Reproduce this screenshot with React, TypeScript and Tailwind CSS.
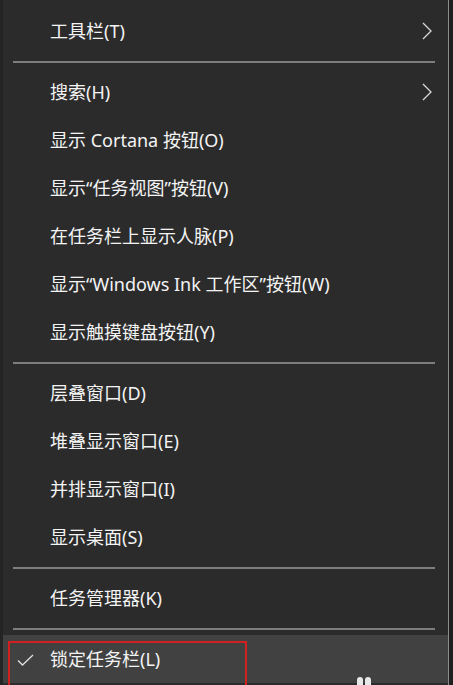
const font = {
  fontFamily: '"Noto Sans", "Noto Sans CJK SC", sans-serif',
};

type Entry =
  | { kind: "item"; label: string; submenu?: boolean; checked?: boolean; active?: boolean }
  | { kind: "sep" };

const entries: Entry[] = [
  { kind: "item", label: "工具栏(T)", submenu: true },
  { kind: "sep" },
  { kind: "item", label: "搜索(H)", submenu: true },
  { kind: "item", label: "显示 Cortana 按钮(O)" },
  { kind: "item", label: "显示“任务视图”按钮(V)" },
  { kind: "item", label: "在任务栏上显示人脉(P)" },
  { kind: "item", label: "显示“Windows Ink 工作区”按钮(W)" },
  { kind: "item", label: "显示触摸键盘按钮(Y)" },
  { kind: "sep" },
  { kind: "item", label: "层叠窗口(D)" },
  { kind: "item", label: "堆叠显示窗口(E)" },
  { kind: "item", label: "并排显示窗口(I)" },
  { kind: "item", label: "显示桌面(S)" },
  { kind: "sep" },
  { kind: "item", label: "任务管理器(K)" },
  { kind: "sep" },
  { kind: "item", label: "锁定任务栏(L)", checked: true, active: true },
];

function Chevron() {
  return (
    <svg width="12" height="18" viewBox="0 0 12 18" fill="none" className="text-[#d8d8d8]">
      <path d="M2 1 L10 9 L2 17" stroke="currentColor" strokeWidth="1.3" />
    </svg>
  );
}

function Check() {
  return (
    <svg width="17" height="12" viewBox="0 0 17 12" fill="none" className="text-[#e0e0e0]">
      <path d="M1 6.5 L5.5 11 L16 1" stroke="currentColor" strokeWidth="1.3" />
    </svg>
  );
}

function MenuRow({ entry }: { entry: Extract<Entry, { kind: "item" }> }) {
  return (
    <div
      className={`relative flex h-12 items-center pl-[47px] pr-[15px] ${
        entry.active ? "bg-[#414141]" : ""
      }`}
    >
      {entry.checked ? (
        <span className="absolute left-[14px] top-[19px]">
          <Check />
        </span>
      ) : null}
      <span className="flex-1 text-[18px] leading-none text-[#f4f4f4]">{entry.label}</span>
      {entry.submenu ? <Chevron /> : null}
    </div>
  );
}

export default function App() {
  return (
    <div style={font} className="relative h-[685px] w-[453px] overflow-hidden bg-[#1f1f1f]">
      <div className="h-full w-[449px] border-l-[3px] border-r border-l-[#242424] border-r-[#8c8c8c] bg-[#2b2b2b] pt-[7px]">
        {entries.map((entry, i) =>
          entry.kind === "sep" ? (
            <div key={i} className="flex h-[13px] items-center pl-[10px] pr-[13px]">
              <div className="h-[2px] w-full bg-[#7d7d7d]" />
            </div>
          ) : (
            <MenuRow key={i} entry={entry} />
          ),
        )}
      </div>
      <div className="absolute left-[8px] top-[641px] h-[60px] w-[239px] border-2 border-[#d1201f]" />
      <div className="absolute left-[357px] top-[677px] flex gap-[2px]">
        <span className="h-[12px] w-[6px] rounded-full bg-[#e8e8e8]" />
        <span className="h-[12px] w-[6px] rounded-full bg-[#e8e8e8]" />
      </div>
    </div>
  );
}
